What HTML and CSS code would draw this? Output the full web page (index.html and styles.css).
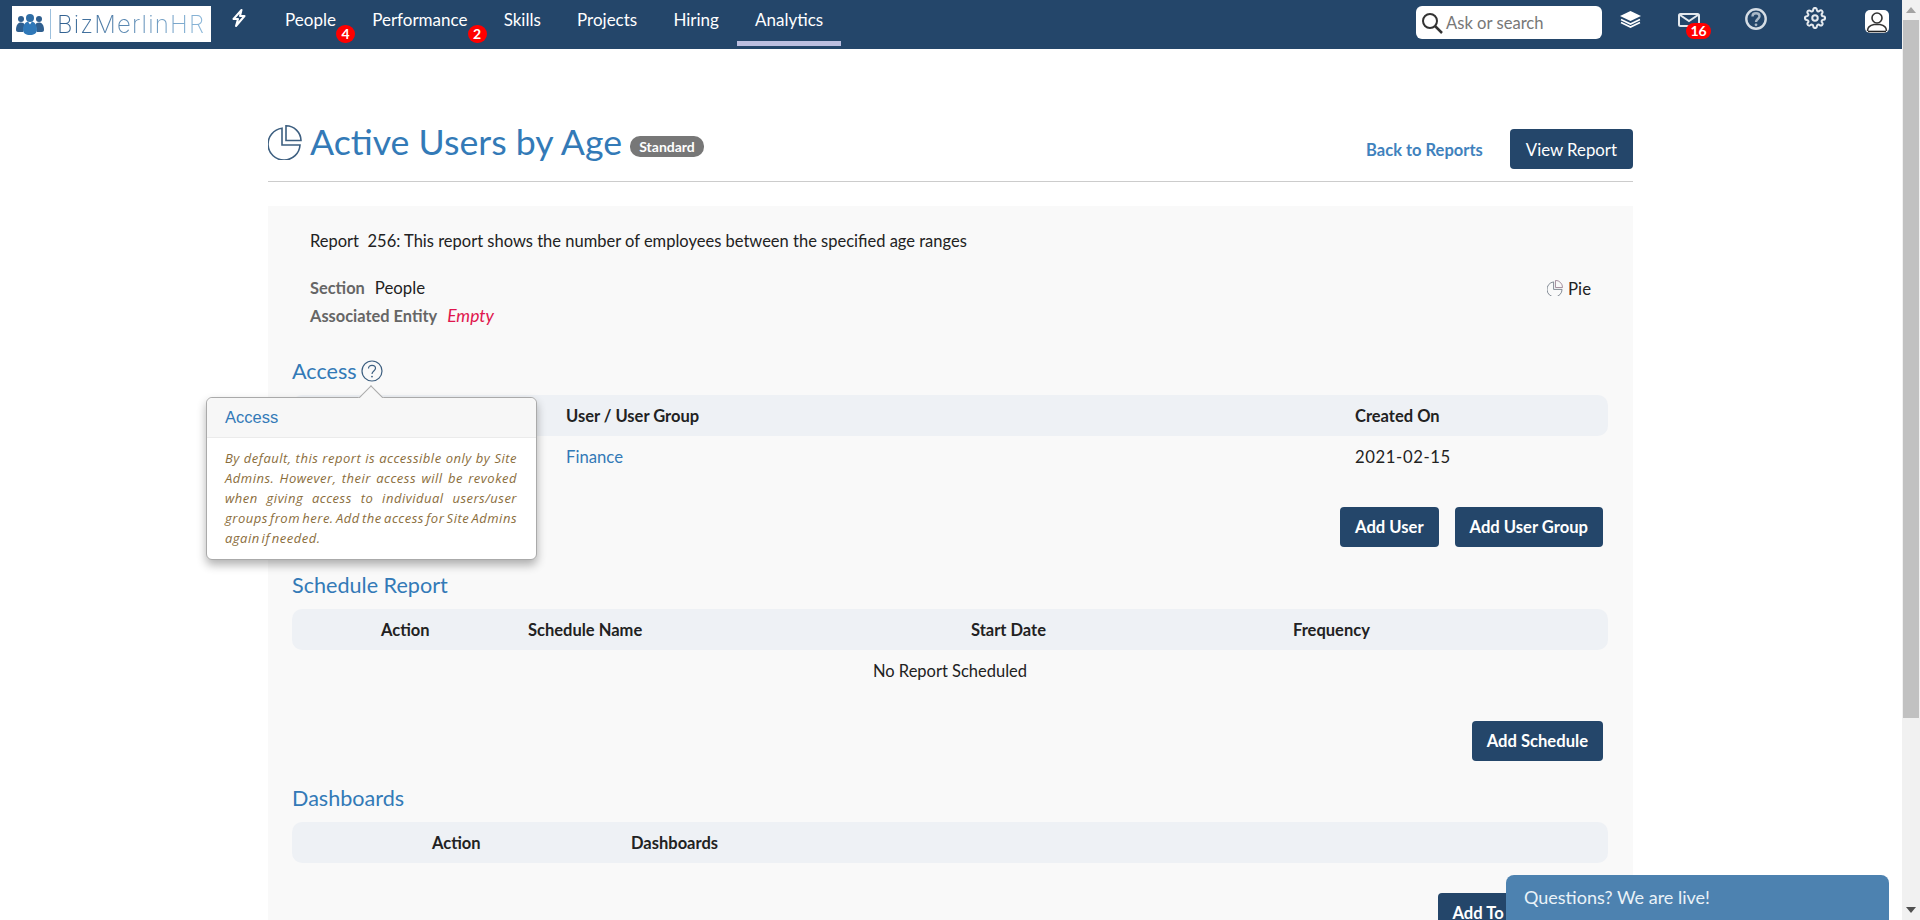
FILE: index.html
```html
<!DOCTYPE html>
<html lang="en">
<head>
    <meta charset="UTF-8">
    <meta name="viewport" content="width=device-width, initial-scale=1.0">
    <title>Active Users by Age</title>
    <link rel="stylesheet" href="styles.css">
</head>
<body>
    <div class="window">
        <div class="scroller">
            <nav class="topbar">
                <a class="logo" href="#">
                    <svg class="logo-people" viewBox="0 0 28 22">
                        <circle cx="5" cy="6" r="3" fill="#2f5f8f"/>
                        <circle cx="23" cy="6" r="3" fill="#2f5f8f"/>
                        <path d="M0 17c0-5 2-7.500 5-7.500 2 0 3 .8 3.500 2L7 19H2c-1 0-2-1-2-2z" fill="#2f5f8f"/>
                        <path d="M28 17c0-5-2-7.500-5-7.500-2 0-3 .8-3.500 2L21 19h5c1 0 2-1 2-2z" fill="#2f5f8f"/>
                        <circle cx="14" cy="5" r="4" fill="#2f6ea6"/>
                        <path d="M7 17c0-6 3-8 5-8.500l2 3 2-3c2 .5 5 2.500 5 8.500 0 3-3 5-7 5s-7-2-7-5z" fill="#2f78b8"/>
                    </svg>
                    <span class="logo-bar"></span>
                    <span class="logo-text">BizMerlinHR</span>
                </a>
                <a class="bolt" href="#">
                    <svg viewBox="0 0 16 18" width="16" height="18">
                        <path d="M10.500 1 2.500 10h4.500l-2 7 8.500-10H9z" fill="none" stroke="#fff" stroke-width="2" stroke-linejoin="round"/>
                    </svg>
                </a>
                <a class="nav-link" href="#">People<span class="badge">4</span></a>
                <a class="nav-link" href="#">Performance<span class="badge">2</span></a>
                <a class="nav-link" href="#">Skills</a>
                <a class="nav-link" href="#">Projects</a>
                <a class="nav-link" href="#">Hiring</a>
                <a class="nav-link active" href="#">Analytics</a>

                <div class="search">
                    <svg viewBox="0 0 22 22" width="22" height="22">
                        <circle cx="9" cy="9" r="7" fill="none" stroke="#333" stroke-width="2"/>
                        <path d="M14 14l7 7" stroke="#333" stroke-width="2.500"/>
                    </svg>
                    <span>Ask or search</span>
                </div>
                <a class="ico ico-layers" href="#">
                    <svg viewBox="0 0 23 18" width="23" height="18">
                        <path d="M11.500 1 22 6l-10.500 5L1 6z" fill="#fff"/>
                        <path d="M2 9.500l9.500 4.500L21 9.500M2 12.500l9.500 4.500 9.500-4.500" fill="none" stroke="#fff" stroke-width="1.600"/>
                    </svg>
                </a>
                <a class="ico ico-mail" href="#">
                    <svg viewBox="0 0 22 14" width="22" height="14">
                        <rect x="1" y="1" width="20" height="12" rx="1.500" fill="none" stroke="#e4e9ee" stroke-width="2"/>
                        <path d="M2 2l9 6 9-6" fill="none" stroke="#e4e9ee" stroke-width="2"/>
                    </svg>
                    <span class="badge badge-mail">16</span>
                </a>
                <a class="ico ico-help" href="#">
                    <svg viewBox="0 0 22 22" width="22" height="22">
                        <circle cx="11" cy="11" r="9.700" fill="none" stroke="#d5dde5" stroke-width="2.400"/>
                        <path d="M7.500 8.500C7.500 6.500 9 5.300 11 5.300s3.500 1.200 3.500 3c0 2.700-3.500 2.700-3.500 5.700" fill="none" stroke="#a9b8c7" stroke-width="2.400"/>
                        <circle cx="11" cy="16.800" r="1.400" fill="#a9b8c7"/>
                    </svg>
                </a>
                <a class="ico ico-gear" href="#">
                    <svg viewBox="0 0 24 24" width="22" height="22" fill="none" stroke="#e4e9ee" stroke-width="2.200">
                        <circle cx="12" cy="12" r="3"/>
                        <path d="M19.400 15a1.650 1.650 0 0 0 .33 1.820l.06.06a2 2 0 0 1 0 2.830 2 2 0 0 1-2.830 0l-.06-.06a1.650 1.650 0 0 0-1.820-.33 1.650 1.650 0 0 0-1 1.510V21a2 2 0 0 1-2 2 2 2 0 0 1-2-2v-.09A1.650 1.650 0 0 0 9 19.400a1.650 1.650 0 0 0-1.820.33l-.06.06a2 2 0 0 1-2.830 0 2 2 0 0 1 0-2.830l.06-.06a1.650 1.650 0 0 0 .33-1.820 1.650 1.650 0 0 0-1.510-1H3a2 2 0 0 1-2-2 2 2 0 0 1 2-2h.09A1.650 1.650 0 0 0 4.600 9a1.650 1.650 0 0 0-.33-1.820l-.06-.06a2 2 0 0 1 0-2.830 2 2 0 0 1 2.830 0l.06.06a1.650 1.650 0 0 0 1.820.33H9a1.650 1.650 0 0 0 1-1.510V3a2 2 0 0 1 2-2 2 2 0 0 1 2 2v.09a1.650 1.650 0 0 0 1 1.510 1.650 1.650 0 0 0 1.820-.33l.06-.06a2 2 0 0 1 2.830 0 2 2 0 0 1 0 2.830l-.06.06a1.650 1.650 0 0 0-.33 1.820V9a1.650 1.650 0 0 0 1.510 1H21a2 2 0 0 1 2 2 2 2 0 0 1-2 2h-.09a1.650 1.650 0 0 0-1.510 1z"/>
                    </svg>
                </a>
                <a class="ico ico-user" href="#">
                    <svg viewBox="0 0 24 23" width="24" height="23">
                        <rect width="24" height="23" rx="5" fill="#fff"/>
                        <circle cx="12" cy="8" r="5" fill="none" stroke="#333" stroke-width="1.600"/>
                        <path d="M2.500 21c0-4 3.500-6 6.500-6.500h6c3 .5 6.500 2.500 6.500 6.500" fill="none" stroke="#333" stroke-width="1.600"/>
                        <path d="M3 21.500h18" stroke="#222" stroke-width="1.600"/>
                    </svg>
                </a>
            </nav>

            <main class="page">
                <header class="page-head">
                    <div class="title-wrap">
                        <svg class="title-icon" viewBox="0 0 34 35" fill="none" stroke="#3d5f80" stroke-width="1.600">
                            <path d="M14 3.200A16 16 0 1 0 32 20H14z"/>
                            <path d="M18 .8A15 15 0 0 1 33 15.500H18z"/>
                        </svg>
                        <h1>Active Users by Age</h1>
                        <span class="tag">Standard</span>
                    </div>
                    <div class="head-actions">
                        <a class="back-link" href="#">Back to Reports</a>
                        <a class="btn btn-view" href="#">View Report</a>
                    </div>
                </header>

                <div class="panel">
                    <div class="info">
                        <p class="desc">Report&nbsp; 256: This report shows the number of employees between the specified age ranges</p>
                        <div class="meta">
                            <div class="meta-rows">
                                <div class="meta-row"><b>Section</b><span>People</span></div>
                                <div class="meta-row"><b>Associated Entity</b><em>Empty</em></div>
                            </div>
                            <div class="chart-type">
                                <svg viewBox="0 0 17 17" width="16" height="16" fill="none" stroke="#7d8590" stroke-width="1">
                                    <path d="M7 2A8 8 0 1 0 16 10H7z"/>
                                    <path d="M9 .4A7.500 7.500 0 0 1 16.500 8H9z" stroke="#a08a9a"/>
                                </svg>
                                Pie
                            </div>
                        </div>
                    </div>

                    <section class="block block-access">
                        <h2>Access
                            <svg viewBox="0 0 22 22" width="22" height="22">
                                <circle cx="11" cy="11" r="10" fill="none" stroke="#3d5f80" stroke-width="1.200"/>
                                <path d="M7.500 8.500C7.500 6.500 9 5.300 11 5.300s3.500 1.200 3.500 3c0 2.700-3.500 2.700-3.500 5.700" fill="none" stroke="#3d5f80" stroke-width="1.200"/>
                                <circle cx="11" cy="16.600" r=".9" fill="#3d5f80"/>
                            </svg>
                        </h2>
                        <table class="table table-access">
                            <thead>
                                <tr><th>Action</th><th>User / User Group</th><th>Created On</th></tr>
                            </thead>
                            <tbody>
                                <tr><td></td><td><a href="#">Finance</a></td><td class="date">2021-02-15</td></tr>
                            </tbody>
                        </table>
                        <div class="buttons">
                            <a class="btn btn-bold" href="#">Add User</a>
                            <a class="btn btn-bold" href="#">Add User Group</a>
                        </div>

                        <div class="popover">
                            <div class="popover-title">Access</div>
                            <div class="popover-body">By default, this report is accessible only by Site Admins. However, their access will be revoked when giving access to individual users/user groups from here. Add the access for Site Admins again if needed.</div>
                        </div>
                    </section>

                    <section class="block block-schedule">
                        <h2>Schedule Report</h2>
                        <table class="table table-schedule">
                            <thead>
                                <tr><th>Action</th><th>Schedule Name</th><th>Start Date</th><th>Frequency</th></tr>
                            </thead>
                            <tbody>
                                <tr><td colspan="4" class="empty">No Report Scheduled</td></tr>
                            </tbody>
                        </table>
                        <div class="buttons">
                            <a class="btn btn-bold" href="#">Add Schedule</a>
                        </div>
                    </section>

                    <section class="block">
                        <h2>Dashboards</h2>
                        <table class="table table-dash">
                            <thead>
                                <tr><th>Action</th><th>Dashboards</th></tr>
                            </thead>
                        </table>
                        <div class="buttons">
                            <a class="btn btn-bold" href="#">Add To Dashboard</a>
                        </div>
                    </section>
                </div>
            </main>
        </div>

        <div class="scrollbar">
            <span class="arrow-up"></span>
            <span class="thumb"></span>
            <span class="track"></span>
            <span class="arrow-down"></span>
        </div>

        <div class="chat">Questions? We are live!</div>
    </div>
</body>
</html>
```

FILE: styles.css
```css
* {
    box-sizing: border-box;
}
html, body {
    margin: 0;
    height: 100%;
    overflow: hidden;
}
body {
    font-family: Lato, "Liberation Sans", sans-serif;
    font-size: 16.5px;
    color: #222;
    background: #fff;
}
a {
    color: #337ab7;
    text-decoration: none;
}
.window {
    display: flex;
    height: 920px;
    position: relative;
}
.scroller {
    flex: 1;
    min-width: 0;
    overflow: hidden;
}

/* top bar */
.topbar {
    display: flex;
    align-items: flex-start;
    height: 49px;
    background: #24466a;
}
.logo {
    display: flex;
    align-items: center;
    width: 199px;
    height: 36px;
    margin: 6px 0 0 12px;
    padding-left: 4px;
    background: #fff;
}
.logo-people {
    flex: none;
    width: 28px;
    height: 22px;
}
.logo-bar {
    flex: none;
    width: 1px;
    height: 30px;
    margin: 0 6px 0 6px;
    background: #9cc0dd;
}
.logo-text {
    font-family: Inter, sans-serif;
    font-size: 24px;
    font-weight: 200;
    letter-spacing: 1.2px;
    background: linear-gradient(90deg, #2f5f8f, #8cb8da);
    -webkit-background-clip: text;
    background-clip: text;
    color: transparent;
}
.bolt {
    display: block;
    width: 36px;
    margin: 9px 0 0 20px;
}
.nav-link {
    position: relative;
    display: block;
    height: 46px;
    padding: 9px 18.100px 0;
    font-size: 17px;
    line-height: 22px;
    color: #fff;
    border-bottom: 5px solid transparent;
}
.nav-link.active {
    border-bottom-color: #bcbfe0;
}
.badge {
    position: absolute;
    top: 25px;
    right: -1px;
    width: 19px;
    height: 18px;
    border-radius: 9px;
    background: #f00;
    color: #fff;
    font-size: 14px;
    font-weight: 700;
    line-height: 18px;
    text-align: center;
}
.search {
    display: flex;
    align-items: center;
    gap: 3px;
    width: 186px;
    height: 33px;
    margin: 6px 0 0 auto;
    padding-left: 5px;
    background: #fff;
    border-radius: 6px;
    font-size: 16.600px;
    color: #777;
}
.ico {
    position: relative;
    display: block;
    line-height: 0;
}
.ico-layers {
    margin: 10px 0 0 17px;
}
.ico-mail {
    margin: 13px 0 0 36px;
}
.badge-mail {
    top: 10px;
    left: 8px;
    right: auto;
    width: 25px;
    height: 16px;
    line-height: 16px;
}
.ico-help {
    margin: 8px 0 0 45px;
}
.ico-gear {
    margin: 7px 0 0 37px;
}
.ico-user {
    margin: 10px 13px 0 39px;
}

/* page */
.page {
    width: 1365px;
    margin-left: 268px;
}
.page-head {
    display: flex;
    justify-content: space-between;
    align-items: flex-start;
    height: 133px;
    padding-top: 74px;
    border-bottom: 1px solid #ccc;
}
.title-wrap {
    display: flex;
    align-items: center;
    margin-top: -1px;
}
.title-icon {
    width: 34px;
    height: 35px;
    margin-right: 8px;
}
h1 {
    margin: 0;
    font-size: 35.700px;
    font-weight: 400;
    line-height: 40px;
    color: #337ab7;
}
.tag {
    width: 74px;
    height: 21px;
    margin: 9px 0 0 8px;
    border-radius: 10px;
    background: #777;
    color: #fff;
    font-size: 14px;
    font-weight: 700;
    line-height: 21px;
    text-align: center;
}
.head-actions {
    display: flex;
    align-items: center;
    gap: 27px;
    margin-top: 6px;
}
.back-link {
    margin-top: 2px;
    font-weight: 700;
    color: #3f82bd;
}
.btn {
    display: block;
    height: 40px;
    padding: 0 15px;
    border-radius: 4px;
    background: #24466a;
    color: #fff;
    line-height: 41px;
    white-space: nowrap;
}
.btn-view {
    padding: 0 16px;
    font-size: 16.800px;
}
.btn-bold {
    font-size: 16.600px;
    font-weight: 700;
}

.panel {
    margin-top: 24px;
    padding: 23px 25px 0 24px;
    background: #f9f9f9;
}
.info {
    padding: 0 17px 0 18px;
}
.desc {
    margin: 0;
    line-height: 24px;
}
.meta {
    display: flex;
    justify-content: space-between;
    margin-top: 23px;
}
.meta-row {
    display: flex;
    height: 24px;
    margin-bottom: 4px;
    font-size: 16.800px;
    line-height: 24px;
}
.meta-row b {
    font-size: 16.400px;
    color: #666;
    margin-right: 10px;
}
.meta-row em {
    font-size: 17.500px;
    color: #e0164e;
}
.chart-type {
    display: flex;
    align-items: center;
    gap: 5px;
    height: 24px;
    font-size: 16.800px;
}

.block {
    position: relative;
    margin-bottom: 24px;
}
.block-access {
    margin-top: 25px;
}
.block-schedule {
    margin-bottom: 23px;
}
h2 {
    display: flex;
    align-items: center;
    gap: 4px;
    height: 28px;
    margin: 0 0 10px;
    font-size: 21.600px;
    font-weight: 400;
    line-height: 28px;
    color: #337ab7;
}
.table {
    width: 100%;
    table-layout: fixed;
    border-collapse: separate;
    border-spacing: 0;
}
.table th, .table td {
    height: 41px;
    padding: 0;
    text-align: left;
}
.table th {
    font-weight: 700;
    background: #eef1f5;
}
.table th:first-child {
    border-radius: 10px 0 0 10px;
}
.table th:last-child {
    border-radius: 0 10px 10px 0;
}
.table td {
    font-size: 16.700px;
}
.table td.date {
    letter-spacing: .6px;
}
.table-access th:nth-child(1) {
    width: 274px;
    padding-left: 89px;
}
.table-access th:nth-child(2) {
    width: 789px;
}
.table-schedule th:nth-child(1) {
    width: 236px;
    padding-left: 89px;
}
.table-schedule th:nth-child(2) {
    width: 443px;
}
.table-schedule th:nth-child(3) {
    width: 322px;
}
.table-dash th:nth-child(1) {
    width: 339px;
    padding-left: 140px;
}
.table td.empty {
    font-size: 16.500px;
    text-align: center;
}
.buttons {
    display: flex;
    justify-content: flex-end;
    gap: 16px;
    margin-top: 30px;
    padding-right: 5px;
}

/* popover over the access table */
.popover {
    position: absolute;
    top: 40px;
    left: -86px;
    width: 331px;
    background: #fff;
    border: 1px solid #aaa;
    border-radius: 6px;
    box-shadow: 0 5px 10px rgba(0, 0, 0, .3);
}
.popover::before {
    content: "";
    position: absolute;
    top: -9px;
    left: 155px;
    width: 17px;
    height: 17px;
    background: #f7f7f7;
    border-top: 1px solid #aaa;
    border-left: 1px solid #aaa;
    transform: rotate(45deg);
}
.popover-title {
    position: relative;
    height: 40px;
    padding-left: 18px;
    border-bottom: 1px solid #ebebeb;
    border-radius: 6px 6px 0 0;
    background: #f7f7f7;
    font-family: "Liberation Sans", sans-serif;
    font-size: 16.500px;
    line-height: 39px;
    color: #337ab7;
}
.popover-body {
    padding: 10px 19px 11px 18px;
    font-family: "Open Sans", sans-serif;
    font-size: 13px;
    font-style: italic;
    letter-spacing: .5px;
    word-spacing: -2px;
    line-height: 20px;
    text-align: justify;
    color: #8a6d3b;
}

/* chat tab */
.chat {
    position: absolute;
    right: 31px;
    bottom: 0;
    width: 383px;
    height: 45px;
    padding-left: 18px;
    border-radius: 8px 8px 0 0;
    background: #4d82b0;
    color: #eaf2f8;
    font-size: 18px;
    line-height: 45px;
}

/* page scrollbar */
.scrollbar {
    display: flex;
    flex-direction: column;
    align-items: center;
    flex: none;
    width: 18px;
    background: #f1f1f1;
}
.arrow-up, .arrow-down {
    flex: none;
    width: 0;
    height: 0;
    border-left: 5px solid transparent;
    border-right: 5px solid transparent;
}
.arrow-up {
    margin: 7px 0;
    border-bottom: 6px solid #a3a3a3;
}
.arrow-down {
    margin: 7px 0;
    border-top: 6px solid #505050;
}
.thumb {
    flex: none;
    width: 16px;
    height: 698px;
    background: #c1c1c1;
}
.track {
    flex: 1;
}
```
